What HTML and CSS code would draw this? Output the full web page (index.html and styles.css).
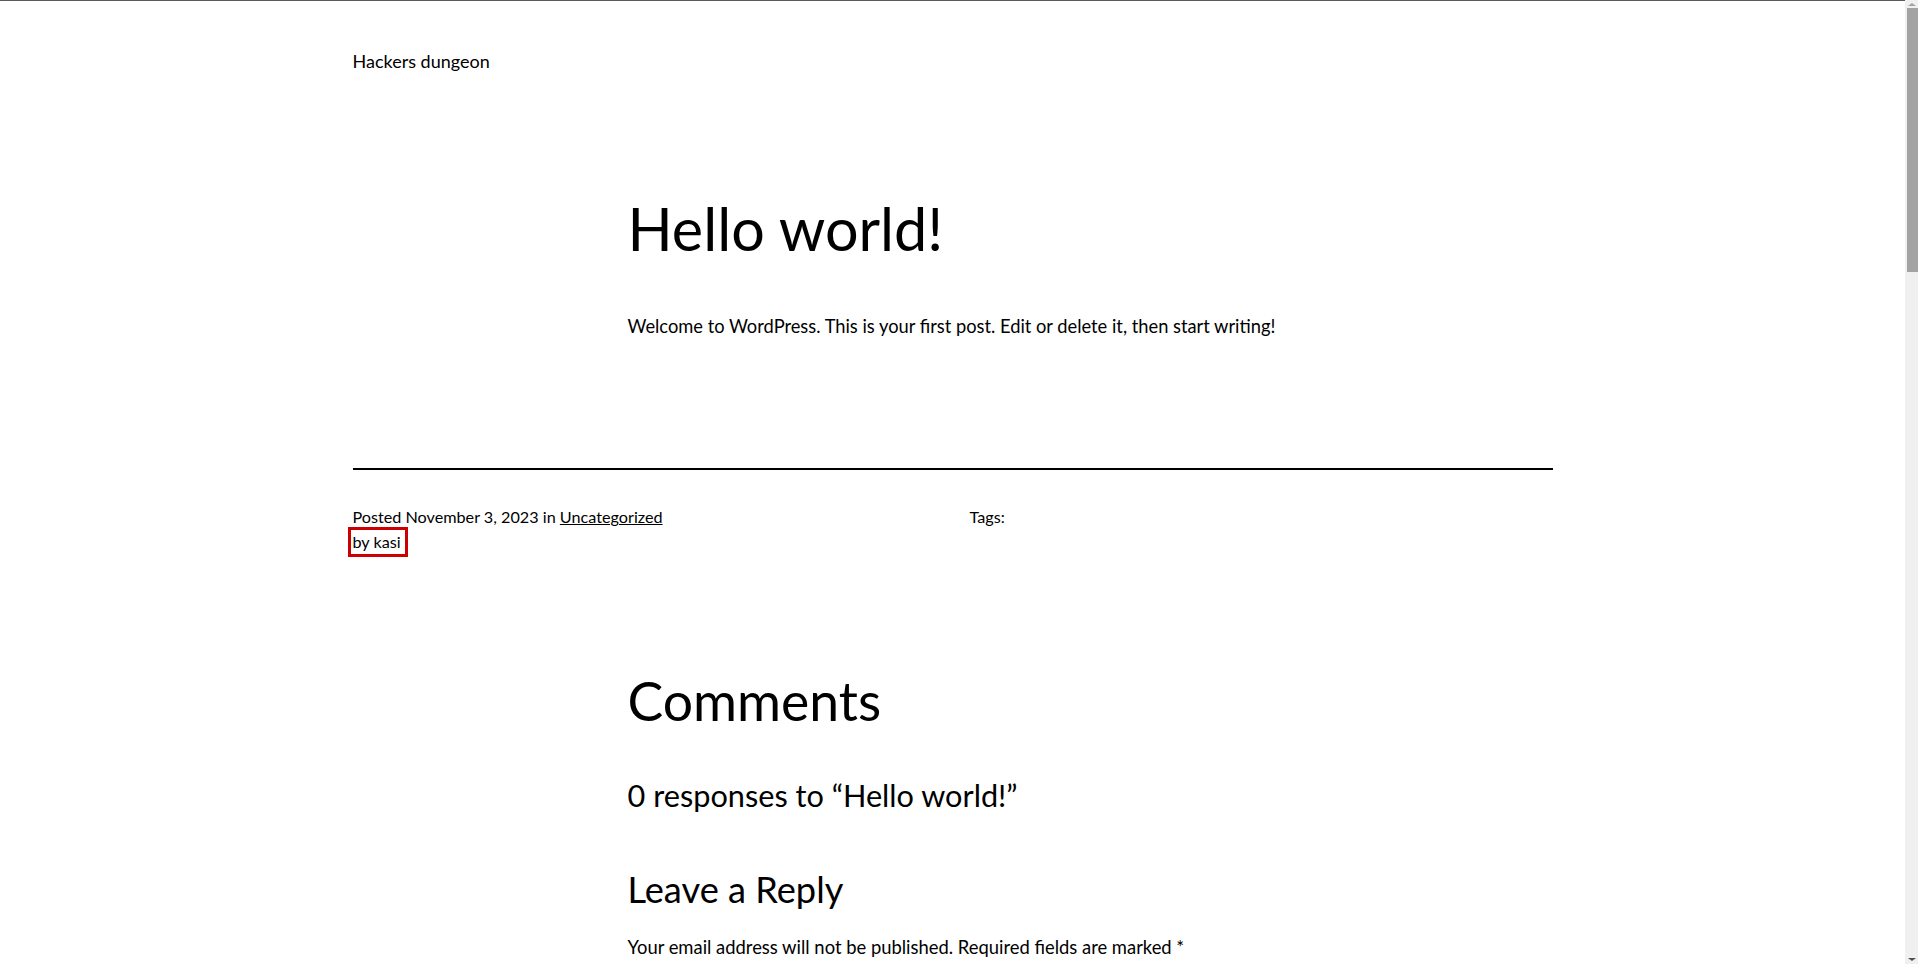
FILE: index.html
```html
<!DOCTYPE html>
<html lang="en">
<head>
<meta charset="utf-8">
<title>Hello world! – Hackers dungeon</title>
<link rel="stylesheet" href="styles.css">
</head>
<body>
<div class="screen">
  <div class="page">
    <header class="site-header">
      <a class="site-title" href="#">Hackers dungeon</a>
    </header>

    <main class="site-main">
      <h1 class="post-title">Hello world!</h1>
      <div class="post-content">
        <p>Welcome to WordPress. This is your first post. Edit or delete it, then start writing!</p>
      </div>

      <hr class="separator">

      <div class="post-meta">
        <div class="meta-col">
          <div class="meta-line">Posted <span>November 3, 2023</span> in <a href="#">Uncategorized</a></div>
          <div class="meta-line"><span class="author-mark">by kasi</span></div>
        </div>
        <div class="meta-col">
          <div class="meta-line">Tags:</div>
        </div>
      </div>

      <section class="comments">
        <h2 class="comments-title">Comments</h2>
        <h3 class="responses-title">0 responses to “Hello world!”</h3>

        <div class="respond">
          <h3 class="reply-title">Leave a Reply</h3>
          <p class="notes">Your email address will not be published. Required fields are marked *</p>
        </div>
      </section>
    </main>
  </div>

  <div class="scrollbar" aria-hidden="true">
    <span class="arrow arrow-up"></span>
    <span class="thumb"></span>
    <span class="track-rest"></span>
    <span class="arrow arrow-down"></span>
  </div>
</div>
</body>
</html>
```

FILE: styles.css
```css
html,
body {
  margin: 0;
  background: #fff;
}

body {
  color: #000;
  font-family: Lato, "Noto Sans", sans-serif;
  font-size: 18.4px;
  line-height: 1.6;
}

a {
  color: #000;
}

.screen {
  display: flex;
  height: 964px;
  overflow: hidden;
}

.page {
  flex: 1;
  min-width: 0;
  overflow: hidden;
  border-top: 1px solid #5a5a5a;
}

/* ---- header ---- */
.site-header {
  width: 1200px;
  margin: 0 auto;
  padding-top: 46px;
}

.site-title {
  display: block;
  font-size: 18px;
  line-height: 28px;
  text-decoration: none;
}

/* ---- main ---- */
.site-main {
  display: flex;
  flex-direction: column;
  align-items: center;
}

.post-title,
.post-content,
.comments {
  width: 650px;
}

.post-title {
  margin: 118px 0 0;
  font-size: 59.3px;
  font-weight: 400;
  line-height: 1.2;
}

.post-content p {
  margin: 48px 0 0;
  font-size: 18.3px;
}

.separator {
  width: 1200px;
  height: 0;
  margin: 127px 0 0;
  border: 0;
  border-top: 2px solid #000;
}

.post-meta {
  width: 1200px;
  margin-top: 34px;
  display: grid;
  grid-template-columns: 583px 1fr;
  column-gap: 34px;
  font-size: 16.2px;
  line-height: 25px;
}

.author-mark {
  display: inline-block;
  line-height: 20px;
  padding-right: 2px;
  outline: 3px solid #cc0000;
  outline-offset: 2px;
}

/* ---- comments ---- */
.comments-title {
  margin: 114px 0 0;
  font-size: 53.5px;
  font-weight: 400;
  line-height: 1.2;
}

.responses-title {
  margin: 45.5px 0 0;
  font-size: 30.7px;
  font-weight: 400;
  line-height: 1.2;
}

.reply-title {
  margin: 52.7px 0 0;
  font-size: 36.2px;
  font-weight: 400;
  line-height: 1.2;
}

.notes {
  margin: 22.2px 0 0;
}

/* ---- fake classic scrollbar ---- */
.scrollbar {
  width: 13px;
  flex: none;
  display: flex;
  flex-direction: column;
  align-items: center;
  background: #f0f0f0;
}

.arrow {
  width: 0;
  height: 0;
  border-left: 4px solid transparent;
  border-right: 4px solid transparent;
}

.arrow-up {
  margin-top: 3px;
  border-bottom: 3px solid #a3a3a3;
}

.arrow-down {
  margin-bottom: 3px;
  border-top: 3px solid #505050;
}

.thumb {
  width: 11px;
  height: 264px;
  margin-top: 2px;
  margin-left: 2px;
  background: #a3a3a3;
}

.track-rest {
  flex: 1;
}
```
